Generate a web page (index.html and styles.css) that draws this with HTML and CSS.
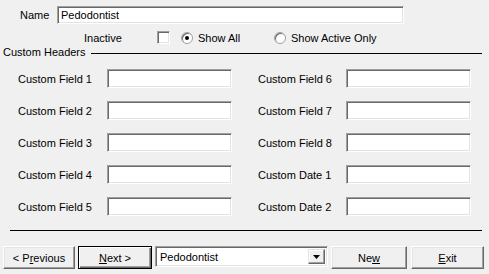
FILE: index.html
```html
<!DOCTYPE html>
<html lang="en">
<head>
  <meta charset="UTF-8">
  <title>Custom Headers</title>
  <link rel="stylesheet" href="styles.css">
</head>
<body>
  <div class="form">
    <div class="name-row">
      <span class="name-label">Name</span>
      <div class="textbox name-box">Pedodontist</div>
    </div>
    <div class="filter-row">
      <span class="inactive-label">Inactive</span>
      <span class="check"></span>
      <span class="radio checked"></span>
      <span class="opt-all">Show All</span>
      <span class="radio"></span>
      <span class="opt-active">Show Active Only</span>
    </div>
    <div class="group-title">
      <span>Custom Headers</span>
      <span class="rule"></span>
    </div>
    <div class="fields">
      <span class="lbl">Custom Field 1</span><div class="textbox field"></div>
      <span class="lbl">Custom Field 6</span><div class="textbox field"></div>
      <span class="lbl">Custom Field 2</span><div class="textbox field"></div>
      <span class="lbl">Custom Field 7</span><div class="textbox field"></div>
      <span class="lbl">Custom Field 3</span><div class="textbox field"></div>
      <span class="lbl">Custom Field 8</span><div class="textbox field"></div>
      <span class="lbl">Custom Field 4</span><div class="textbox field"></div>
      <span class="lbl">Custom Date 1</span><div class="textbox field"></div>
      <span class="lbl">Custom Field 5</span><div class="textbox field"></div>
      <span class="lbl">Custom Date 2</span><div class="textbox field"></div>
    </div>
    <div class="divider"></div>
    <div class="buttons">
      <div class="btn btn-prev">&lt; P<u>r</u>evious</div>
      <div class="btn btn-next default"><u>N</u>ext &gt;</div>
      <div class="combo">
        <span class="combo-text">Pedodontist</span>
        <span class="combo-arrow">
          <svg width="7" height="4" viewBox="0 0 7 4"><path d="M0 0h7L3.5 4z" fill="#000"/></svg>
        </span>
      </div>
      <div class="btn btn-new">Ne<u>w</u></div>
      <div class="btn btn-exit"><u>E</u>xit</div>
    </div>
  </div>
</body>
</html>
```

FILE: styles.css
```css
html,body{
  margin: 0;
  padding: 0;
}
body{
  width: 489px;
  height: 274px;
  background-color: #f0f0f0;
  font: 11px "Liberation Sans", Arial, sans-serif;
  color: #000;
  overflow: hidden;
}
.form{
  display: flex;
  flex-direction: column;
}
.textbox{
  box-sizing: border-box;
  background-color: #fff;
  border: 1px solid;
  border-color: #a0a0a0 #fff #fff #a0a0a0;
  box-shadow: inset 1px 1px #696969, inset -1px -1px #e3e3e3;
}
.name-row{
  display: flex;
  align-items: center;
  margin-top: 6px;
  padding-left: 20px;
}
.name-label{
  width: 37px;
}
.name-box{
  width: 347px;
  height: 18px;
  line-height: 16px;
  padding-left: 3px;
}
.filter-row{
  display: flex;
  align-items: center;
  height: 13px;
  margin-top: 7px;
  padding-left: 84px;
}
.inactive-label{
  width: 73px;
}
.check{
  box-sizing: border-box;
  width: 13px;
  height: 13px;
  background-color: #fff;
  border: 1px solid;
  border-color: #a0a0a0 #fff #fff #a0a0a0;
  box-shadow: inset 1px 1px #696969, inset -1px -1px #e3e3e3;
  margin-right: 11px;
}
.radio{
  box-sizing: border-box;
  width: 12px;
  height: 12px;
  border-radius: 50%;
  background-color: #fff;
  border: 1px solid #a0a0a0;
  box-shadow: inset 1px 1px #696969;
  display: flex;
  align-items: center;
  justify-content: center;
  margin-right: 5px;
}
.radio.checked::after{
  content: "";
  width: 4px;
  height: 4px;
  border-radius: 50%;
  background-color: #000;
}
.opt-all{
  width: 76px;
}
.group-title{
  display: flex;
  align-items: center;
  height: 13px;
  margin-top: 1px;
  padding-left: 3px;
}
.rule{
  flex: 1;
  height: 1px;
  background-color: #000;
  margin: 3px 7px 0 5px;
}
.fields{
  display: grid;
  grid-template-columns: 89px 151px 88px 125px;
  grid-auto-rows: 19px;
  row-gap: 13px;
  margin-top: 11px;
  padding-left: 18px;
}
.fields .lbl{
  align-self: center;
  white-space: nowrap;
}
.field{
  width: 125px;
  height: 19px;
}
.divider{
  height: 1px;
  background-color: #000;
  margin: 14px 7px 0 10px;
}
.buttons{
  display: flex;
  margin-top: 15px;
  padding-left: 3px;
  gap: 3px;
}
.btn{
  box-sizing: border-box;
  height: 23px;
  display: flex;
  align-items: center;
  justify-content: center;
  background-color: #f0f0f0;
  border: 1px solid;
  border-color: #fff #696969 #696969 #fff;
  box-shadow: inset -1px -1px #a0a0a0, inset 1px 1px #e3e3e3;
}
.btn.default{
  border: 1px solid #000;
  box-shadow: inset 1px 1px #fff, inset -1px -1px #696969, inset -2px -2px #a0a0a0;
}
.btn-prev{
  width: 72px;
}
.btn-next{
  width: 74px;
}
.btn-new{
  width: 76px;
}
.btn-exit{
  width: 73px;
  margin-left: 1px;
}
.combo{
  box-sizing: border-box;
  width: 173px;
  height: 21px;
  display: flex;
  align-items: center;
  background-color: #fff;
  border: 1px solid;
  border-color: #a0a0a0 #fff #fff #a0a0a0;
  box-shadow: inset 1px 1px #696969, inset -1px -1px #e3e3e3;
  padding: 2px 2px 2px 4px;
}
.combo-text{
  flex: 1;
}
.combo-arrow{
  box-sizing: border-box;
  width: 17px;
  height: 15px;
  display: flex;
  align-items: center;
  justify-content: center;
  background-color: #f0f0f0;
  border: 1px solid;
  border-color: #e3e3e3 #696969 #696969 #e3e3e3;
  box-shadow: inset -1px -1px #a0a0a0, inset 1px 1px #fff;
}
```
